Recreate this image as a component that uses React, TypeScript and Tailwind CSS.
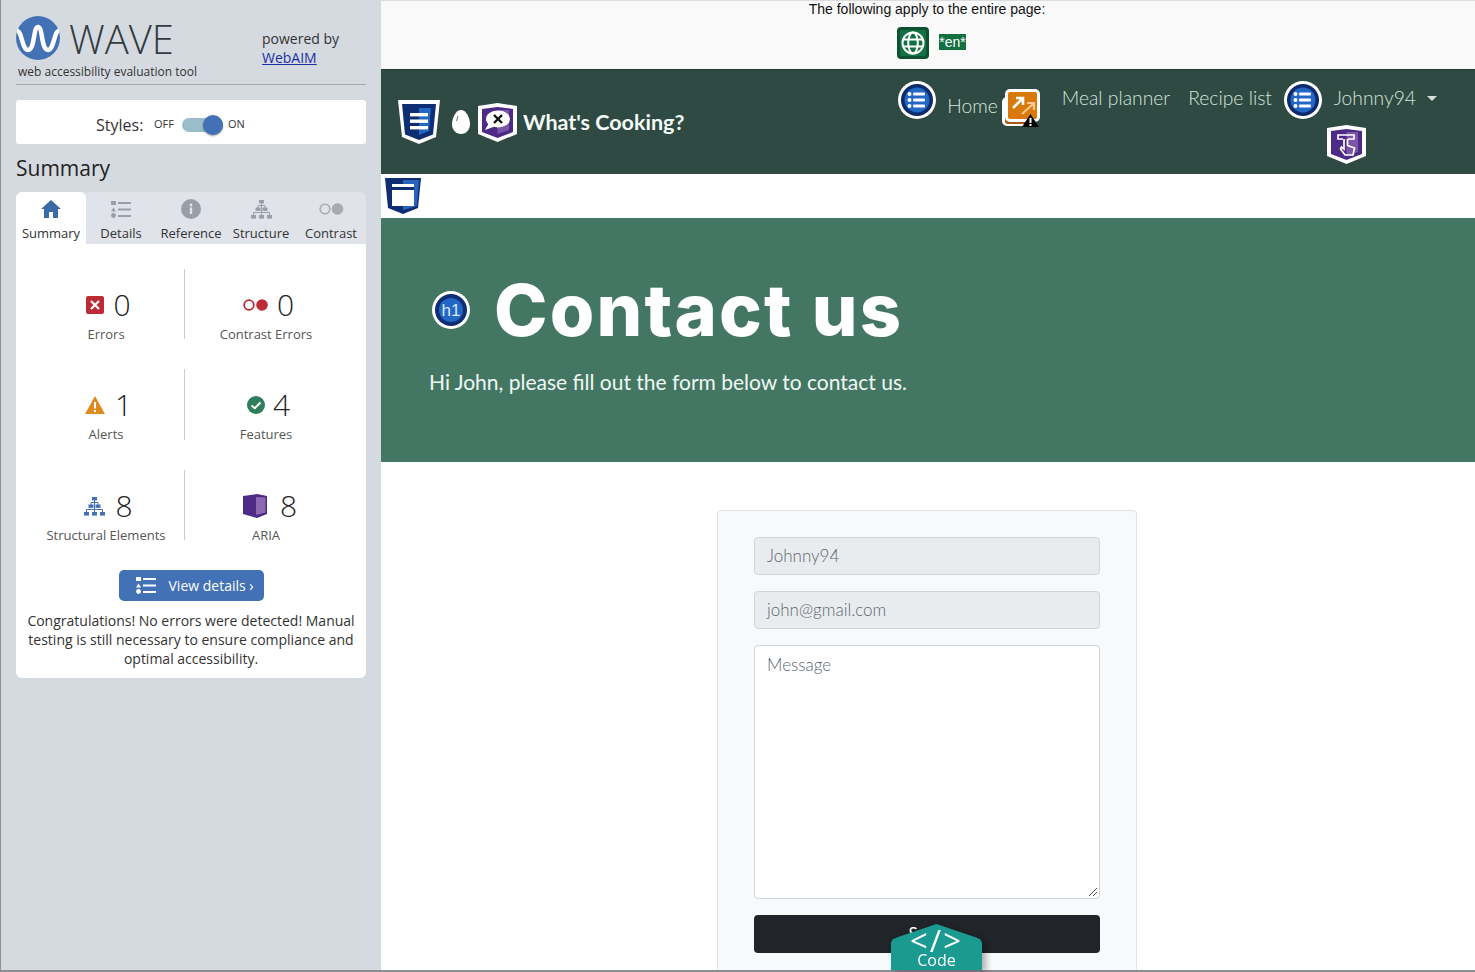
const OPEN = "font-['Open_Sans',sans-serif]"
const QUICK = "font-['Lato',sans-serif]"

function WaveLogo() {
  return (
    <svg width="44" height="44" viewBox="0 0 44 44">
      <circle cx="22" cy="22" r="22" fill="#4272b5" />
      <path d="M1 15 C6 15 6 34 12 34 C19 34 17 11 22 11 C27 11 25 34 32 34 C38 34 38 15 43 15" fill="none" stroke="#fff" strokeWidth="4.5" />
    </svg>
  )
}

function HomeIcon() {
  return (
    <svg width="20" height="18" viewBox="0 0 20 18">
      <path d="M10 0 L20 9 H17 V18 H12 V12 H8 V18 H3 V9 H0 Z" fill="#3a6ba5" />
    </svg>
  )
}

function ListIcon({ color = "#9a9ea6" }: { color?: string }) {
  return (
    <svg width="20" height="17" viewBox="0 0 20 17" fill={color}>
      <rect x="0" y="0" width="5" height="4" />
      <path d="M2.5 6.5 L5 10.5 H0 Z" />
      <circle cx="2.5" cy="14.5" r="2.4" />
      <rect x="7" y="1" width="13" height="2" />
      <rect x="7" y="7.5" width="13" height="2" />
      <rect x="7" y="14" width="13" height="2" />
    </svg>
  )
}

function TreeIcon({ color }: { color: string }) {
  return (
    <svg width="21" height="19" viewBox="0 0 21 19" fill={color}>
      <path d="M10.5 3 V15 M7 9 V5.5 H14 V9 M2.5 15 V12.5 H18.5 V15" fill="none" stroke={color} strokeWidth="1" />
      <rect x="8" y="0" width="5" height="3.4" />
      <rect x="4.5" y="7.5" width="5" height="3.4" />
      <rect x="11.5" y="7.5" width="5" height="3.4" />
      <rect x="0" y="15" width="5" height="3.6" />
      <rect x="8" y="15" width="5" height="3.6" />
      <rect x="16" y="15" width="5" height="3.6" />
    </svg>
  )
}

function BadgeShield({ children, light = "#7b56a8" }: { children?: React.ReactNode; light?: string }) {
  return (
    <svg width="39" height="39" viewBox="0 0 39 39" className="shrink-0">
      <path d="M0 3 L19.5 0 L39 3 V31 L19.5 39 L0 31 Z" fill="#fff" />
      <path d="M4 6 L19.5 4 L35 6 V29 L19.5 35 L4 29 Z" fill="#4d2a85" />
      <path d="M19.5 7 H31 V27 L19.5 31 Z" fill={light} />
      {children}
    </svg>
  )
}

function CircleList() {
  return (
    <svg width="38" height="38" viewBox="0 0 38 38" className="shrink-0">
      <circle cx="19" cy="19" r="19" fill="#fff" />
      <circle cx="19" cy="19" r="16" fill="#0d2a6c" />
      <circle cx="19" cy="19" r="12.5" fill="#2367c4" />
      <g fill="#fff">
        <circle cx="11.5" cy="13" r="2" />
        <circle cx="11.5" cy="19" r="2" />
        <circle cx="11.5" cy="25" r="2" />
        <rect x="15" y="11.5" width="12" height="3" rx="1" />
        <rect x="15" y="17.5" width="12" height="3" rx="1" />
        <rect x="15" y="23.5" width="12" height="3" rx="1" />
      </g>
    </svg>
  )
}

function Stat({ icon, n, label, gap }: { icon: React.ReactNode; n: number; label: string; gap: string }) {
  return (
    <div className="h-[70px] flex flex-col items-center pt-[21px]">
      <div className={`flex items-center ${gap} h-[30px] shrink-0 pl-[5px]`}>
        {icon}
        <span className="text-[30px] font-light leading-[30px] text-[#222]">{n}</span>
      </div>
      <div className="mt-[5px] shrink-0 text-[13px] leading-[18px] text-[#555]">{label}</div>
    </div>
  )
}

function Tab({ label, icon, active }: { label: string; icon: React.ReactNode; active?: boolean }) {
  return (
    <div className={`flex flex-col items-center ${active ? "bg-white rounded-t-[6px]" : ""}`}>
      <div className="h-[22px] mt-[6px] flex items-center justify-center">{icon}</div>
      <div className="mt-[4px] leading-[18px] whitespace-nowrap">{label}</div>
    </div>
  )
}

function Sidebar() {
  return (
    <aside className={`${OPEN} w-[381px] shrink-0 h-full bg-[#d5dae1] border-l border-l-[#8a8d92] pl-[15px] pr-[15px]`}>
      <div className="h-[85px] border-b border-[#a7abb1] relative flex">
        <div className="w-[246px] pt-[16px]">
          <div className="flex items-center gap-[9px] h-[44px]">
            <WaveLogo />
            <span className="text-[40px] font-light leading-[44px] mt-[1px] text-[#333a40]">WAVE</span>
          </div>
          <div className="pl-[2px] mt-[3px] text-[12px] leading-[18px] text-[#333]">web accessibility evaluation tool</div>
        </div>
        <div className="pt-[29px] text-[14px] leading-[19px] text-[#333]">
          <div>powered by</div>
          <a className="text-[#1a2fa8] underline">WebAIM</a>
        </div>
      </div>

      <div className="mt-[15px] h-[44px] bg-white rounded-[3px] flex items-center pl-[80px] pt-[5px]">
        <span className="text-[16px] text-[#333] w-[58px]">Styles:</span>
        <span className="text-[11px] text-[#333] w-[28px]">OFF</span>
        <span className="relative w-[41px] h-[14px] rounded-full bg-[#9abdcb] mr-[5px]">
          <span className="absolute right-0 top-[-3px] w-[20px] h-[20px] rounded-full bg-[#4272b5] shadow-[0_1px_2px_rgba(0,0,0,0.4)]" />
        </span>
        <span className="text-[11px] text-[#333]">ON</span>
      </div>

      <h2 className="mt-[9px] text-[21px] leading-[30px] text-[#222]">Summary</h2>

      <div className="mt-[9px] grid grid-cols-5 h-[52px] bg-[#e0e4ea] rounded-t-[6px] text-[13px] text-[#333]">
        <Tab active label="Summary" icon={<HomeIcon />} />
        <Tab label="Details" icon={<ListIcon />} />
        <Tab label="Reference" icon={
          <svg width="20" height="20" viewBox="0 0 20 20">
            <circle cx="10" cy="10" r="10" fill="#9a9ea6" />
            <rect x="8.8" y="8.5" width="2.4" height="6.5" fill="#e0e4ea" />
            <circle cx="10" cy="6" r="1.4" fill="#e0e4ea" />
          </svg>
        } />
        <Tab label="Structure" icon={<TreeIcon color="#9a9ea6" />} />
        <Tab label="Contrast" icon={
          <svg width="25" height="12" viewBox="0 0 25 12">
            <circle cx="6" cy="6" r="4.8" fill="none" stroke="#a8acb2" strokeWidth="1.6" />
            <circle cx="18.5" cy="6" r="5.8" fill="#a8acb2" />
          </svg>
        } />
      </div>

      <div className="bg-white rounded-b-[6px] h-[434px] pt-[25px]">
        <div className="grid grid-cols-[156px_1px_1fr] grid-rows-[70px_71px_70px] gap-y-[30px] pl-[12px] pr-[19px] mb-[30px] [&>*:nth-child(3n+2)]:bg-[#c9ccd0]">
          <Stat gap="gap-[9px]" n={0} label="Errors" icon={
            <svg width="18" height="18" viewBox="0 0 18 18">
              <rect width="18" height="18" rx="2" fill="#bd2c34" />
              <path d="M5 5 L13 13 M13 5 L5 13" stroke="#fff" strokeWidth="2.2" />
            </svg>
          } />
          <div />
          <Stat gap="gap-[9px]" n={0} label="Contrast Errors" icon={
            <svg width="25" height="12" viewBox="0 0 25 12">
              <circle cx="6" cy="6" r="4.8" fill="none" stroke="#bd2c34" strokeWidth="1.8" />
              <circle cx="19" cy="6" r="5.8" fill="#bd2c34" />
            </svg>
          } />
          <Stat gap="gap-[10px]" n={1} label="Alerts" icon={
            <svg width="20" height="18" viewBox="0 0 20 18">
              <path d="M10 0 L20 18 H0 Z" fill="#e08a1e" />
              <rect x="9" y="6" width="2" height="6.5" fill="#fff" />
              <rect x="9" y="14" width="2" height="2" fill="#fff" />
            </svg>
          } />
          <div />
          <Stat gap="gap-[8px]" n={4} label="Features" icon={
            <svg width="18" height="18" viewBox="0 0 18 18">
              <circle cx="9" cy="9" r="9" fill="#2e7d5b" />
              <path d="M4.5 9.5 L7.8 12.2 L13.5 6.5" fill="none" stroke="#fff" strokeWidth="2" />
            </svg>
          } />
          <Stat gap="gap-[10px]" n={8} label="Structural Elements" icon={<TreeIcon color="#4272b5" />} />
          <div />
          <Stat gap="gap-[13px]" n={8} label="ARIA" icon={
            <svg width="24" height="24" viewBox="0 0 24 24" className="ml-[3px]">
              <path d="M0 2 L14 0 L24 2 V20 L14 24 L0 20 Z" fill="#4d2a85" />
              <path d="M13 3 L22.5 3.5 V18.5 L13 21 Z" fill="#8c68b0" />
            </svg>
          } />
        </div>
        <div className="flex justify-center">
          <button className="w-[145px] h-[31px] bg-[#4272b5] rounded-[5px] flex items-center text-white text-[14px] pl-[17px] pb-[1px] gap-[13px]">
            <ListIcon color="#fff" />
            <span>View details ›</span>
          </button>
        </div>
        <p className="mt-[10px] px-[10px] text-center text-[14px] leading-[19px] text-[#333]">
          Congratulations! No errors were detected! Manual testing is still necessary to ensure compliance and optimal accessibility.
        </p>
      </div>
    </aside>
  )
}

function Navbar() {
  return (
    <nav className="h-[105px] bg-[#2f4a42] border-t border-[#1f3a32] flex justify-between pl-[17px] pr-[38px] relative">
      <div className="flex items-center mt-[30px] h-[44px]">
        <svg width="42" height="44" viewBox="0 0 42 44" className="shrink-0">
          <path d="M0 0 H42 L38 37 L21 44 L4 37 Z" fill="#fff" />
          <path d="M4 4 H38 L35 34.5 L21 40 L7 34.5 Z" fill="#0e2d73" />
          <path d="M21 8 H33 L31 31 L21 35 Z" fill="#2367c4" />
          <g fill="#fff">
            <rect x="12" y="13" width="18" height="3.4" />
            <rect x="12" y="19.5" width="18" height="3.4" />
            <rect x="12" y="26" width="18" height="3.4" />
          </g>
        </svg>
        <svg width="18" height="24" viewBox="0 0 18 24" className="ml-[12px] mr-[8px]">
          <path d="M9 0 C14 0 18 8 18 14 C18 20 14 24 9 24 C4 24 0 20 0 14 C0 8 4 0 9 0 Z" fill="#fff" />
          <path d="M6 6 L4.5 11" stroke="#5b6f7c" strokeWidth="1" />
        </svg>
        <BadgeShield>
          <ellipse cx="20" cy="16" rx="12" ry="8.5" fill="#fff" />
          <path d="M11 20 L7 27 L18 23 Z" fill="#fff" />
          <path d="M16 12 L24 20 M24 12 L16 20" stroke="#111" strokeWidth="2.4" />
        </BadgeShield>
        <span className={`${QUICK} ml-[6px] text-[21.5px] font-bold text-[#f4fbf8] whitespace-nowrap`}>What's Cooking?</span>
      </div>

      <div className={`${QUICK} flex flex-col items-end text-[19.3px] font-light text-[#d3e6dd]`}>
        <div className="flex items-start h-[60px] pt-[11px]">
          <CircleList />
          <span className="ml-[11px] mt-[12px] leading-[26px]">Home</span>
          <svg width="40" height="40" viewBox="0 0 40 40" className="mt-[7px] mr-[22px] ml-[2px] shrink-0">
            <rect x="2" y="9" width="31" height="29" rx="5" fill="#fff" />
            <rect x="5" y="12" width="28" height="24" rx="3" fill="#a85b14" />
            <rect x="5" y="1" width="35" height="33" rx="5" fill="#fff" />
            <rect x="8" y="4" width="29" height="27" rx="2" fill="#d9780b" />
            <path d="M13 20 L23 10 M16 10 H23 V17" fill="none" stroke="#fff" strokeWidth="2.6" />
            <path d="M22 26 L33 16 M27 15 H34 V22" fill="none" stroke="#fbc98f" strokeWidth="2.2" />
            <path d="M30.5 26 L39 39 H22 Z" fill="#000" />
            <rect x="29.5" y="30" width="2" height="5" fill="#fff" />
            <rect x="29.5" y="36" width="2" height="2" fill="#fff" />
          </svg>
          <span className="mt-[4px] leading-[26px] whitespace-nowrap">Meal planner</span>
          <span className="ml-[18px] mt-[4px] leading-[26px] whitespace-nowrap">Recipe list</span>
          <span className="ml-[12px]"><CircleList /></span>
          <span className="ml-[12px] mt-[4px] leading-[26px] whitespace-nowrap">Johnny94</span>
          <span className="ml-[11px] mt-[15px] border-x-[5px] border-x-transparent border-t-[5px] border-t-[#d5e2dc]" />
        </div>
        <div className="mt-[-5px] mr-[71px]">
          <BadgeShield>
            <path d="M16 14 H11 V10 H27 V14 H21" fill="none" stroke="#fff" strokeWidth="1.7" />
            <path d="M17 14 V24 L14.5 22 L13.5 24 L18 30 H26 L27.5 23 L20.5 20.5 V14" fill="none" stroke="#fff" strokeWidth="1.7" />
          </BadgeShield>
        </div>
      </div>
    </nav>
  )
}

function Field({ text }: { text: string }) {
  return (
    <div className={`${QUICK} h-[38px] bg-[#e9ecef] border border-[#ced4da] rounded-[4px] flex items-center px-[12px] text-[17px] font-light text-[#5c6670]`}>{text}</div>
  )
}

export default function App() {
  return (
    <div className="relative w-[1475px] h-[972px] overflow-hidden flex bg-white">
      <Sidebar />
      <main className="flex-1 min-w-0 border-t border-[#dcdcdc]">
        <div className="h-[68px] bg-[#f9f9f9] flex flex-col items-center font-['Liberation_Sans',sans-serif] text-[14px] text-[#111]">
          <div className="leading-[16px] pr-[2px]">The following apply to the entire page:</div>
          <div className="flex items-center gap-[10px] mt-[10px] pl-[7px]">
            <svg width="32" height="32" viewBox="0 0 32 32">
              <rect width="32" height="32" rx="4" fill="#0b5132" />
              <rect x="3" y="3" width="26" height="26" fill="#137040" />
              <g fill="none" stroke="#fff" strokeWidth="2">
                <circle cx="16" cy="16" r="10.5" />
                <ellipse cx="16" cy="16" rx="4.8" ry="10.5" />
                <path d="M6 12.5 H26 M6 19.5 H26" />
              </g>
            </svg>
            <span className="bg-[#137040] text-white leading-[16px] h-[16px] mb-[2px]">*en*</span>
          </div>
        </div>

        <Navbar />

        <div className="h-[44px] bg-white pl-[4px] pt-[4px]">
          <svg width="36" height="36" viewBox="0 0 36 36">
            <path d="M0 0 H36 L33 30 L18 36 L3 30 Z" fill="#0e2d73" />
            <path d="M18 2 H34 L32 28 L18 32 Z" fill="#2a63bc" />
            <rect x="7" y="6" width="22" height="22" fill="#fff" />
            <rect x="7" y="9" width="22" height="3" fill="#0e2d73" />
          </svg>
        </div>

        <section className="h-[244px] bg-[#437663] pl-[50px] text-white pt-[49px]">
          <div className="flex items-center">
            <svg width="40" height="40" viewBox="0 0 40 40" className="shrink-0">
              <circle cx="20" cy="20" r="19" fill="#fff" />
              <circle cx="20" cy="20" r="16" fill="#0e2d73" />
              <circle cx="20" cy="20" r="12" fill="#2367c4" />
              <text x="20" y="26" textAnchor="middle" fontSize="17" fill="#dbe9fa" fontFamily="Liberation Sans">h1</text>
            </svg>
            <h1 className="ml-[23px] font-['Inter',sans-serif] font-extrabold text-[72px] leading-[86px] tracking-[2.2px] whitespace-nowrap">Contact us</h1>
          </div>
          <p className={`${QUICK} mt-[14px] ml-[-2px] text-[21px] leading-[30px] text-[#f0f8f4]`}>Hi John, please fill out the form below to contact us.</p>
        </section>

        <div className="flex justify-center pt-[48px] pr-[2px]">
          <div className="w-[420px] h-[500px] bg-[#f8f9fa] border border-[#dfe2e6] rounded-[4px] px-[36px] pt-[26px] flex flex-col gap-[16px]">
            <Field text="Johnny94" />
            <Field text="john@gmail.com" />
            <div className={`${QUICK} relative h-[254px] bg-white border border-[#ced4da] rounded-[4px] px-[12px] py-[6px] text-[17px] font-light text-[#5c6670]`}>
              Message
              <svg width="10" height="10" viewBox="0 0 10 10" className="absolute right-[1px] bottom-[1px]">
                <path d="M1 9 L9 1 M5 9 L9 5" stroke="#555" strokeWidth="1" />
              </svg>
            </div>
            <button className={`${QUICK} h-[38px] bg-[#212529] rounded-[4px] text-white text-[17px]`}>Send</button>
          </div>
        </div>
      </main>

      <div className="absolute left-0 right-0 bottom-0 h-[2px] bg-[#8a8d92]" />

      {/* WAVE code tab, sits over the page */}
      <div className="absolute left-[891px] top-[924px] drop-shadow-[4px_2px_3px_rgba(0,0,0,0.3)]">
        <div className={`${OPEN} w-[91px] h-[46px] text-white flex flex-col items-center [clip-path:polygon(0_40%,2%_33%,8%_28%,50%_0,92%_28%,98%_33%,100%_40%,100%_100%,0_100%)] bg-[#1a9a90]`}>
          <div className="text-[31px] font-medium leading-[30px] tracking-[2px] mt-[1px]">&lt;/&gt;</div>
          <div className="text-[16px] leading-[16px] mt-[-3px]">Code</div>
        </div>
      </div>
    </div>
  )
}
